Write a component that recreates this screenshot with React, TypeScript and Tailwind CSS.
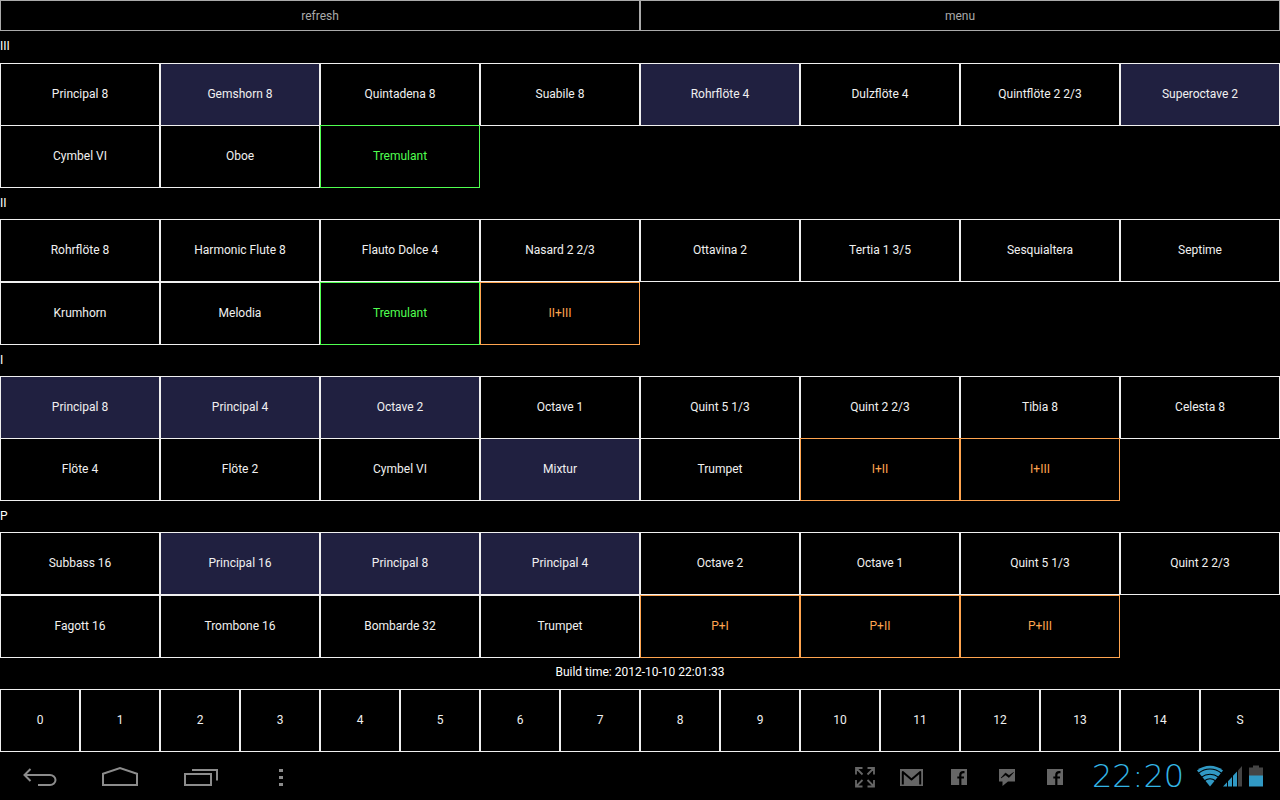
import type { ReactNode } from "react";
import clsx from "clsx";

type Kind = "stop" | "tremulant" | "coupler";
type Stop = { name: string; kind?: Kind; on?: boolean };
type Division = { name: string; shared?: boolean; rows: Stop[][] };

const s = (name: string, on = false): Stop => ({ name, on });
const tremulant: Stop = { name: "Tremulant", kind: "tremulant" };
const coupler = (name: string): Stop => ({ name, kind: "coupler" });

const divisions: Division[] = [
  {
    name: "III",
    shared: true,
    rows: [
      [s("Principal 8"), s("Gemshorn 8", true), s("Quintadena 8"), s("Suabile 8"), s("Rohrflöte 4", true), s("Dulzflöte 4"), s("Quintflöte 2 2/3"), s("Superoctave 2", true)],
      [s("Cymbel VI"), s("Oboe"), tremulant],
    ],
  },
  {
    name: "II",
    rows: [
      [s("Rohrflöte 8"), s("Harmonic Flute 8"), s("Flauto Dolce 4"), s("Nasard 2 2/3"), s("Ottavina 2"), s("Tertia 1 3/5"), s("Sesquialtera"), s("Septime")],
      [s("Krumhorn"), s("Melodia"), tremulant, coupler("II+III")],
    ],
  },
  {
    name: "I",
    shared: true,
    rows: [
      [s("Principal 8", true), s("Principal 4", true), s("Octave 2", true), s("Octave 1"), s("Quint 5 1/3"), s("Quint 2 2/3"), s("Tibia 8"), s("Celesta 8")],
      [s("Flöte 4"), s("Flöte 2"), s("Cymbel VI"), s("Mixtur", true), s("Trumpet"), coupler("I+II"), coupler("I+III")],
    ],
  },
  {
    name: "P",
    rows: [
      [s("Subbass 16"), s("Principal 16", true), s("Principal 8", true), s("Principal 4", true), s("Octave 2"), s("Octave 1"), s("Quint 5 1/3"), s("Quint 2 2/3")],
      [s("Fagott 16"), s("Trombone 16"), s("Bombarde 32"), s("Trumpet"), coupler("P+I"), coupler("P+II"), coupler("P+III")],
    ],
  },
];

const presets = ["0", "1", "2", "3", "4", "5", "6", "7", "8", "9", "10", "11", "12", "13", "14", "S"];

const kindClass: Record<Kind, string> = {
  stop: "border-[#f0f0f0] text-[#f0f0f0]",
  tremulant: "border-[#50ff50] text-[#50ff50]",
  coupler: "border-[#ffa550] text-[#ffa550]",
};

function StopButton({ name, kind = "stop", on = false }: Stop) {
  return (
    <button
      type="button"
      aria-pressed={on}
      className={clsx("h-[63px] border pb-0.5", kindClass[kind], on ? "bg-[#202040]" : "bg-black")}
    >
      {name}
    </button>
  );
}

function DivisionPanel({ division, first }: { division: Division; first: boolean }) {
  return (
    <section>
      <h2 className={clsx("flex items-center pb-0.5 text-white", first ? "h-8" : "h-[31px]")}>{division.name}</h2>
      {division.rows.map((row, i) => (
        <div key={i} className={clsx("grid grid-cols-8", i > 0 && division.shared && "-mt-px")}>
          {row.map((stop) => (
            <StopButton key={stop.name} {...stop} />
          ))}
        </div>
      ))}
    </section>
  );
}

function NavButton({ label, children }: { label: string; children: ReactNode }) {
  return (
    <button type="button" aria-label={label} className="h-12 w-20">
      <svg viewBox="0 0 80 48" className="h-12 w-20" fill="none" stroke="#8c8c8c" strokeWidth="2">
        {children}
      </svg>
    </button>
  );
}

function StatusIcon({ label, children }: { label: string; children: ReactNode }) {
  return (
    <svg viewBox="0 0 48 48" className="size-12" role="img" aria-label={label} fill="#666666">
      {children}
    </svg>
  );
}

function FacebookIcon() {
  return (
    <StatusIcon label="Facebook">
      <path d="M16 17h16v16H16z" />
      <path d="M29.5 20.2h-1.3c-2.2 0-2.9 1-2.9 2.9V33M22.3 25.5h6.7" fill="none" stroke="#000" strokeWidth="2.2" />
    </StatusIcon>
  );
}

function WifiIcon() {
  return (
    <svg viewBox="0 0 26 22" className="h-[22px] w-[26px]" role="img" aria-label="Wi-Fi">
      <path d="M0 5.400C7.500-.8 18.500-.8 26 5.400L13 21.500z" fill="#3199c4" />
      <path
        d="M1.500 8.300C8.500 2.600 17.500 2.600 24.500 8.300M4.500 12.100c5-3.900 12-3.900 17 0M7.500 15.800c3.300-2.500 7.700-2.500 11 0"
        fill="none"
        stroke="#000"
        strokeWidth="1.100"
      />
    </svg>
  );
}

function SignalIcon() {
  return (
    <svg viewBox="0 0 20 22" className="h-[22px] w-5" role="img" aria-label="Signal strength">
      <path d="M0 21.500l4-4.200v4.200zM5 16.200l4-4.300v9.600H5zM10 10.800l4-4.300v15h-4z" fill="#3199c4" />
      <path d="M15 5.400L19 1v20.500h-4z" fill="#444444" />
    </svg>
  );
}

function BatteryIcon() {
  return (
    <svg viewBox="0 0 14 22" className="h-[22px] w-3.5" role="img" aria-label="Battery">
      <path d="M4 .5h6v2h4v8.500H0V2.500h4z" fill="#444444" />
      <path d="M0 10.500h14v11H0z" fill="#3199c4" />
    </svg>
  );
}

export default function App() {
  return (
    <div className="flex min-h-screen flex-col bg-black font-['Roboto','Noto_Sans',sans-serif] text-xs text-[#f0f0f0]">
      <main>
        <header className="grid grid-cols-2">
          <button type="button" className="h-[31px] border border-[#aaaaaa] text-[#aaaaaa]">refresh</button>
          <button type="button" className="h-[31px] border border-[#aaaaaa] text-[#aaaaaa]">menu</button>
        </header>
        {divisions.map((division, i) => (
          <DivisionPanel key={division.name} division={division} first={i === 0} />
        ))}
        <p className="flex h-[31px] items-center justify-center pb-1 text-white">Build time: 2012-10-10 22:01:33</p>
        <div className="grid grid-cols-16">
          {presets.map((preset) => (
            <StopButton key={preset} name={preset} />
          ))}
        </div>
      </main>

      <footer className="mt-auto flex h-12 items-center justify-between">
        <nav className="flex">
          <NavButton label="Back">
            <path d="M30.500 17L24.500 23l6 6M24.500 23H50a5.500 5 0 0 1 0 10H38" />
          </NavButton>
          <NavButton label="Home">
            <path d="M23 33V21.800L40 16l17 5.800V33z" />
          </NavButton>
          <NavButton label="Recent apps">
            <path d="M25 22h26v11H25zM32 18h25v10.500" />
          </NavButton>
          <NavButton label="Menu">
            <path d="M39 17h4v3h-4zM39 24h4v3h-4zM39 31h4v3h-4z" fill="#8c8c8c" stroke="none" />
          </NavButton>
        </nav>

        <div className="flex items-center pr-[17px]">
          <StatusIcon label="Full screen">
            <path
              d="M17 22.500V16h6.500M17 16l6.500 6.500M28.500 16H35v6.500M35 16l-6.500 6.500M17 28v6.500h6.500M17 34.500l6.500-6.500M35 28v6.500h-6.500M35 34.500L28.500 28"
              fill="none"
              stroke="#666666"
              strokeWidth="1.800"
            />
          </StatusIcon>
          <StatusIcon label="Gmail">
            <path d="M13 17h23v17H13z" />
            <path
              d="M15.800 32.500V20l8.700 7.500 8.700-7.500v12.500"
              fill="none"
              stroke="#000"
              strokeWidth="2"
              strokeLinejoin="round"
            />
          </StatusIcon>
          <FacebookIcon />
          <StatusIcon label="Messenger">
            <path d="M16 17h16v12.500h-7L19.500 34v-4.500H16z" />
            <path d="M18 26l4.500-5 3.500 2.500 4.500-3-4.500 5-3.500-2.500z" fill="#000" stroke="#000" strokeWidth=".6" />
          </StatusIcon>
          <FacebookIcon />
          <time
            dateTime="22:20"
            className="w-[118px] text-center font-['DejaVu_Sans','Noto_Sans',sans-serif] text-[32px]/[36px] font-extralight text-[#33b5e5]"
          >
            22:20
          </time>
          <div className="flex items-center">
            <WifiIcon />
            <SignalIcon />
          </div>
          <div className="ml-1.5 flex">
            <BatteryIcon />
          </div>
        </div>
      </footer>
    </div>
  );
}
